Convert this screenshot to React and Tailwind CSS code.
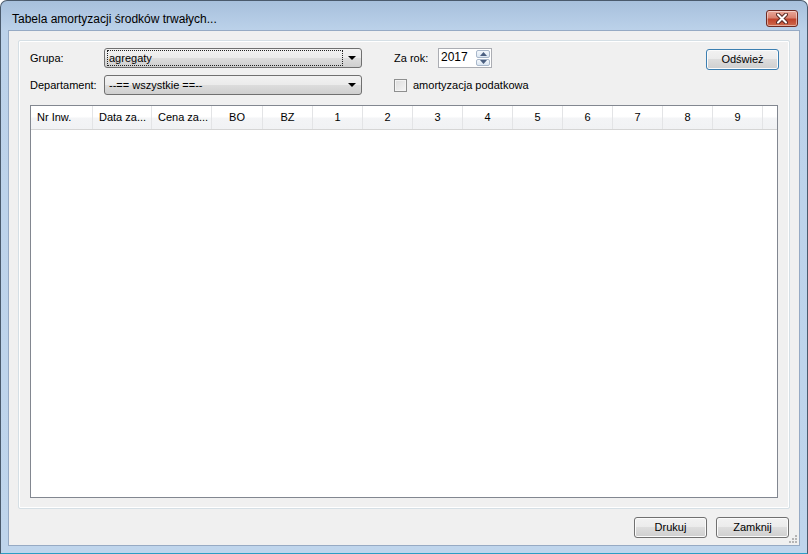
import React from "react";

const font = { fontFamily: '"Liberation Sans", Arial, sans-serif' };

function Combo({ text, focused }) {
  return (
    <div className="relative w-[258px] h-[20px] rounded-[3px] border border-[#707070] bg-[linear-gradient(#f2f2f2_0%,#ebebeb_50%,#dddddd_50%,#cfcfcf_100%)] flex items-center">
      <div
        className={
          "ml-[2px] h-[16px] w-[236px] flex items-center pl-[1px] " +
          (focused ? "border border-dotted border-[#222]" : "border border-transparent")
        }
      >
        <span className="text-[11px] leading-none text-black">{text}</span>
      </div>
      <svg className="absolute right-[5px] top-[7px]" width="8" height="4" viewBox="0 0 8 4">
        <path d="M0 0H8L4 4Z" fill="#000" />
      </svg>
    </div>
  );
}

function Button({ children, def, w = "w-[73px]" }) {
  return (
    <div
      className={
        w +
        " h-[21px] rounded-[3px] border flex items-center justify-center text-[11px] text-black bg-[linear-gradient(#f2f2f2_0%,#ebebeb_50%,#dddddd_50%,#cfcfcf_100%)] shadow-[inset_0_0_0_1px_#fbfbfb] " +
        (def ? "border-[#3c7fb1] shadow-[inset_0_0_0_1px_#c5ecfc]" : "border-[#707070]")
      }
    >
      {children}
    </div>
  );
}

const cols = [
  { t: "Nr Inw.", w: "w-[62px]", left: true },
  { t: "Data za...", w: "w-[59px]", left: true },
  { t: "Cena za...", w: "w-[60px]", left: true },
  { t: "BO", w: "w-[51px]" },
  { t: "BZ", w: "w-[50px]" },
  { t: "1", w: "w-[50px]" },
  { t: "2", w: "w-[50px]" },
  { t: "3", w: "w-[50px]" },
  { t: "4", w: "w-[50px]" },
  { t: "5", w: "w-[50px]" },
  { t: "6", w: "w-[50px]" },
  { t: "7", w: "w-[50px]" },
  { t: "8", w: "w-[50px]" },
  { t: "9", w: "w-[50px]" },
];

export default function App() {
  return (
    <div style={font} className="w-[808px] h-[554px] bg-white">
      <div className="w-[808px] h-[554px] rounded-t-[7px] border border-[#4a5a6c] border-b-[#2b9ec4] bg-[linear-gradient(#a7c0dc_0px,#bcd2ea_30px,#bfd5ec_100%)] flex flex-col">
        {/* title bar */}
        <div className="h-[29px] flex items-start pl-[11px] pr-[9px]">
          <span className="mt-[11px] text-[12px] leading-[14px] text-black">
            Tabela amortyzacji środków trwałych...
          </span>
          <div className="flex-1" />
          <div className="mt-[9px] w-[32px] h-[17px] rounded-[3px] border border-[#6f2a22] bg-[linear-gradient(#eaa89a_0%,#d98270_45%,#c0432c_55%,#cf6a4c_100%)] shadow-[inset_0_0_0_1px_rgba(255,255,255,0.45)] flex items-center justify-center">
            <svg width="12" height="11" viewBox="0 0 12 11">
              <path d="M2 1.5L10 9.5M10 1.5L2 9.5" stroke="#5b2a24" strokeWidth="4" strokeLinecap="round" />
              <path d="M2 1.5L10 9.5M10 1.5L2 9.5" stroke="#ffffff" strokeWidth="2" strokeLinecap="round" />
            </svg>
          </div>
        </div>
        {/* client */}
        <div className="relative mx-[7px] mb-[7px] flex-1 bg-[#f0f0f0] border border-[#96aac4] flex flex-col">
          {/* panel */}
          <div className="mt-[9px] mx-[9px] h-[469px] border border-[#d5dfe5] shadow-[inset_0_0_0_1px_#ffffff] rounded-[2px] flex flex-col pt-[7px] pl-[11px] pr-[10px] pb-[10px]">
            <div className="flex items-center h-[20px]">
              <span className="w-[74px] text-[11px] text-black">Grupa:</span>
              <Combo text="agregaty" focused />
              <span className="ml-[32px] w-[44px] text-[11px] text-black">Za rok:</span>
              <div className="w-[54px] h-[20px] border border-[#abadb3] bg-white flex items-stretch">
                <span className="flex-1 pl-[2px] text-[12px] leading-[16px] text-black">2017</span>
                <div className="w-[15px] flex flex-col gap-[1px] p-[1px] pl-0">
                  <div className="flex-1 rounded-[2px] border border-[#a9b8cb] bg-[linear-gradient(#f4f8fc,#dbe6f2)] flex items-center justify-center">
                    <svg width="7" height="4" viewBox="0 0 7 4"><path d="M0 4L3.5 0L7 4Z" fill="#4b5f80" /></svg>
                  </div>
                  <div className="flex-1 rounded-[2px] border border-[#a9b8cb] bg-[linear-gradient(#f4f8fc,#dbe6f2)] flex items-center justify-center">
                    <svg width="7" height="4" viewBox="0 0 7 4"><path d="M0 0L7 0L3.5 4Z" fill="#4b5f80" /></svg>
                  </div>
                </div>
              </div>
              <div className="flex-1" />
              <div className="mt-[2px]">
                <Button def w="w-[73px]">Odśwież</Button>
              </div>
            </div>
            <div className="flex items-center h-[20px] mt-[7px]">
              <span className="w-[74px] text-[11px] text-black">Departament:</span>
              <Combo text="--== wszystkie ==--" />
              <div className="ml-[32px] w-[13px] h-[13px] border border-[#8e8f8f] bg-[linear-gradient(135deg,#dcdcdc,#f6f6f6)] shadow-[inset_0_0_0_1px_#f4f4f4]" />
              <span className="ml-[6px] text-[11px] text-black">amortyzacja podatkowa</span>
            </div>
            {/* table */}
            <div className="mt-[10px] mr-[1px] flex-1 border border-[#828790] bg-white flex flex-col">
              <div className="h-[24px] flex bg-[linear-gradient(#ffffff_0%,#ffffff_45%,#f3f4f6_55%,#f1f2f4_100%)] border-b border-[#d5d5d5]">
                {cols.map((c) => (
                  <div
                    key={c.t}
                    className={
                      c.w +
                      " h-full border-r border-[#e3e4e6] flex items-center text-[11px] text-black " +
                      (c.left ? "pl-[6px]" : "justify-center")
                    }
                  >
                    {c.t}
                  </div>
                ))}
                <div className="flex-1" />
              </div>
            </div>
          </div>
          {/* bottom buttons */}
          <div className="flex justify-end gap-[9px] pr-[10px] pt-[8px]">
            <Button>Drukuj</Button>
            <Button>Zamknij</Button>
          </div>
          {/* size grip */}
          <svg className="absolute right-[1px] bottom-[1px]" width="10" height="10" viewBox="0 0 10 10">
            {[[8, 2], [8, 5], [5, 5], [8, 8], [5, 8], [2, 8]].map(([x, y]) => (
              <rect key={x + "-" + y} x={x - 1} y={y - 1} width="2" height="2" fill="#b5b5b5" />
            ))}
          </svg>
        </div>
      </div>
    </div>
  );
}
